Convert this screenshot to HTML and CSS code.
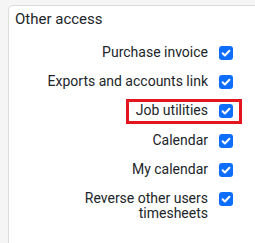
FILE: index.html
```html
<!DOCTYPE html>
<html lang="en">
<head>
    <meta charset="UTF-8">
    <title>Other access</title>
    <link rel="stylesheet" href="styles.css">
</head>
<body>
    <div class="card">
        <h3 class="card-title">Other access</h3>
        <div class="access-list">
            <div class="access-row">
                <span class="pair">
                    <span class="access-label">Purchase invoice</span>
                    <span class="check"><svg viewBox="0 0 14 14"><path d="M3.6 7.2l2.3 2.3 4.5-4.7"/></svg></span>
                </span>
            </div>
            <div class="access-row">
                <span class="pair">
                    <span class="access-label">Exports and accounts link</span>
                    <span class="check"><svg viewBox="0 0 14 14"><path d="M3.6 7.2l2.3 2.3 4.5-4.7"/></svg></span>
                </span>
            </div>
            <div class="access-row marked">
                <span class="pair highlight">
                    <span class="access-label">Job utilities</span>
                    <span class="check"><svg viewBox="0 0 14 14"><path d="M3.6 7.2l2.3 2.3 4.5-4.7"/></svg></span>
                </span>
            </div>
            <div class="access-row">
                <span class="pair">
                    <span class="access-label">Calendar</span>
                    <span class="check"><svg viewBox="0 0 14 14"><path d="M3.6 7.2l2.3 2.3 4.5-4.7"/></svg></span>
                </span>
            </div>
            <div class="access-row">
                <span class="pair">
                    <span class="access-label">My calendar</span>
                    <span class="check"><svg viewBox="0 0 14 14"><path d="M3.6 7.2l2.3 2.3 4.5-4.7"/></svg></span>
                </span>
            </div>
            <div class="access-row">
                <span class="pair">
                    <span class="access-label">Reverse other users timesheets</span>
                    <span class="check"><svg viewBox="0 0 14 14"><path d="M3.6 7.2l2.3 2.3 4.5-4.7"/></svg></span>
                </span>
            </div>
        </div>
    </div>
</body>
</html>
```

FILE: styles.css
```css
body {
    font-family: Roboto, "Liberation Sans", sans-serif;
    background: #f5f5f5;
    margin: 0;
    padding: 5px 0 0 8px;
    overflow: hidden;
    color: #212529;
}

.card {
    background: white;
    border: 1px solid #dcdcdc;
    border-radius: 5px 0 0 0;
    width: 260px;
    height: 260px;
    padding: 0 0 0 6px;
}

.card-title {
    font-size: 15px;
    font-weight: 400;
    line-height: 20px;
    margin: 0;
    padding-top: 3px;
    height: 20px;
}

.access-list {
    padding-top: 9px;
    width: 218px;
}

.access-row {
    display: flex;
    justify-content: flex-end;
    padding: 7px 0;
}

.access-row.marked {
    padding-bottom: 8px;
}

.pair {
    display: flex;
    align-items: flex-start;
    gap: 11px;
    position: relative;
}

.access-label {
    font-size: 14px;
    line-height: 15px;
    text-align: right;
    max-width: 165px;
}

.check {
    width: 14px;
    height: 14px;
    flex: none;
    background: #0d6efd;
    border-radius: 3px;
    margin-top: 1px;
}

.check svg {
    display: block;
    width: 14px;
    height: 14px;
    fill: none;
    stroke: white;
    stroke-width: 2;
    stroke-linecap: round;
    stroke-linejoin: round;
}

.highlight::after {
    content: "";
    position: absolute;
    top: -4px;
    bottom: -6px;
    left: -10px;
    right: -9px;
    border: 3px solid #e3151f;
}
```
